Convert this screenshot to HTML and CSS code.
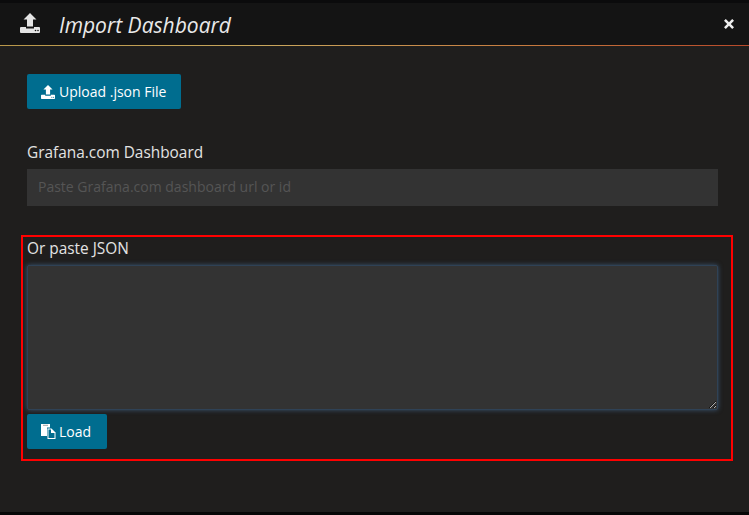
FILE: index.html
```html
<!DOCTYPE html>
<html lang="en">
<head>
<meta charset="utf-8">
<title>Import Dashboard</title>
<link rel="stylesheet" href="styles.css">
</head>
<body>
<div class="modal">
  <header class="modal-header">
    <svg class="header-icon" viewBox="0 0 20 20"><path d="M10 0 16.500 6.500H13V13.500H7V6.500H3.500Z M1 14H6V15.500H14V14H19Q20 14 20 15V19Q20 20 19 20H1Q0 20 0 19V15Q0 14 1 14Z" fill="#e4e4e4"/><circle cx="15.500" cy="17.500" r=".8" fill="#141414"/><circle cx="18" cy="17.500" r=".8" fill="#141414"/></svg>
    <h1 class="modal-title">Import Dashboard</h1>
    <svg class="close-icon" viewBox="0 0 10 10"><path d="M1.800 0 5 3.200 8.200 0 10 1.800 6.800 5 10 8.200 8.200 10 5 6.800 1.800 10 0 8.200 3.200 5 0 1.800Z" fill="#eeeeee"/></svg>
  </header>
  <main class="modal-body">
    <button class="btn btn-upload" type="button">
      <svg class="btn-icon" viewBox="0 0 20 20"><path d="M10 0 16.500 6.500H13V13.500H7V6.500H3.500Z M1 14H6V15.500H14V14H19Q20 14 20 15V19Q20 20 19 20H1Q0 20 0 19V15Q0 14 1 14Z" fill="#fff"/><circle cx="15.500" cy="17.500" r=".8" fill="#006d8f"/><circle cx="18" cy="17.500" r=".8" fill="#006d8f"/></svg>
      Upload .json File
    </button>
    <label class="field-label grafana-label">Grafana.com Dashboard</label>
    <input class="text-input" type="text" placeholder="Paste Grafana.com dashboard url or id">
    <section class="json-box">
      <label class="field-label json-label">Or paste JSON</label>
      <textarea class="json-area"></textarea>
      <button class="btn btn-load" type="button">
        <svg class="btn-icon load-icon" viewBox="0 0 15 15"><path d="M0 0H9V3.500H6V12H0Z" fill="#fff"/><path d="M6.500 4.500H10.500L14.500 8.500V15H6.500Z" fill="#fff"/><path d="M7.500 5.500H10V9H13.500V14H7.500Z" fill="#006d8f"/><path d="M2 1.300H7" stroke="#777" stroke-width=".7"/></svg>
        Load
      </button>
    </section>
  </main>
</div>
</body>
</html>
```
FILE: styles.css
```css
* { box-sizing: border-box; }
html, body { margin: 0; padding: 0; height: 100%; }
body {
  background: #1f1f20;
  font-family: "Open Sans", "Liberation Sans", sans-serif;
  color: #e3e3e3;
  overflow: hidden;
}
.modal {
  height: 515px;
  border-top: 3px solid #0b0b0c;
  border-bottom: 3px solid #070707;
  background: #1f1e1d;
}
.modal-header {
  height: 43px;
  display: flex;
  align-items: center;
  background: #141414;
  border-bottom: 1px solid transparent;
  border-image: linear-gradient(90deg, #b8974a 0%, #c9a75d 35%, #c77b3f 70%, #b8492a 100%) 1;
  padding: 0 15px 0 20px;
}
.header-icon { width: 20px; height: 20px; margin-top: -2px; }
.modal-title {
  margin: 2px 0 0 19px;
  flex: 1;
  font-size: 21px;
  font-weight: 400;
  font-style: italic;
  color: #e9e9e9;
  line-height: 28px;
}
.close-icon { width: 10px; height: 10px; margin-top: -1px; }
.modal-body { padding: 28px 31px 0 27px; }
.btn {
  display: flex;
  align-items: center;
  height: 35px;
  border: 0;
  border-radius: 2px;
  background: #006d8f;
  color: #fff;
  font-family: inherit;
  font-size: 14px;
  padding: 0 14px;
}
.btn-upload { width: 154px; }
.btn-icon { width: 14px; height: 14px; margin-right: 4px; }
.load-icon { width: 15px; height: 15px; margin: 0 3px 0 0; }
.btn-load { width: 80px; margin-top: 4px; }
.field-label { display: block; font-size: 15.4px; line-height: 20px; color: #e3e3e3; }
.grafana-label { margin-top: 34px; }
.text-input {
  display: block;
  width: 691px;
  height: 37px;
  margin-top: 6px;
  padding: 0 11px 2px;
  border: 0;
  background: #333333;
  font-family: inherit;
  font-size: 14px;
  color: #e3e3e3;
}
.text-input::placeholder { color: #555555; opacity: 1; }
.json-box {
  width: 712px;
  height: 226px;
  margin: 29px 0 0 -6px;
  border: 2px solid #ff0000;
  padding: 2px 0 0 4px;
}
.json-label { line-height: 20px; }
.json-area {
  display: block;
  width: 691px;
  height: 145px;
  margin-top: 6px;
  border: 1px solid #2f4256;
  border-radius: 2px;
  background: #333333;
  box-shadow: 0 0 5px rgba(82, 130, 180, .55);
  outline: 0;
  resize: both;
}
```
